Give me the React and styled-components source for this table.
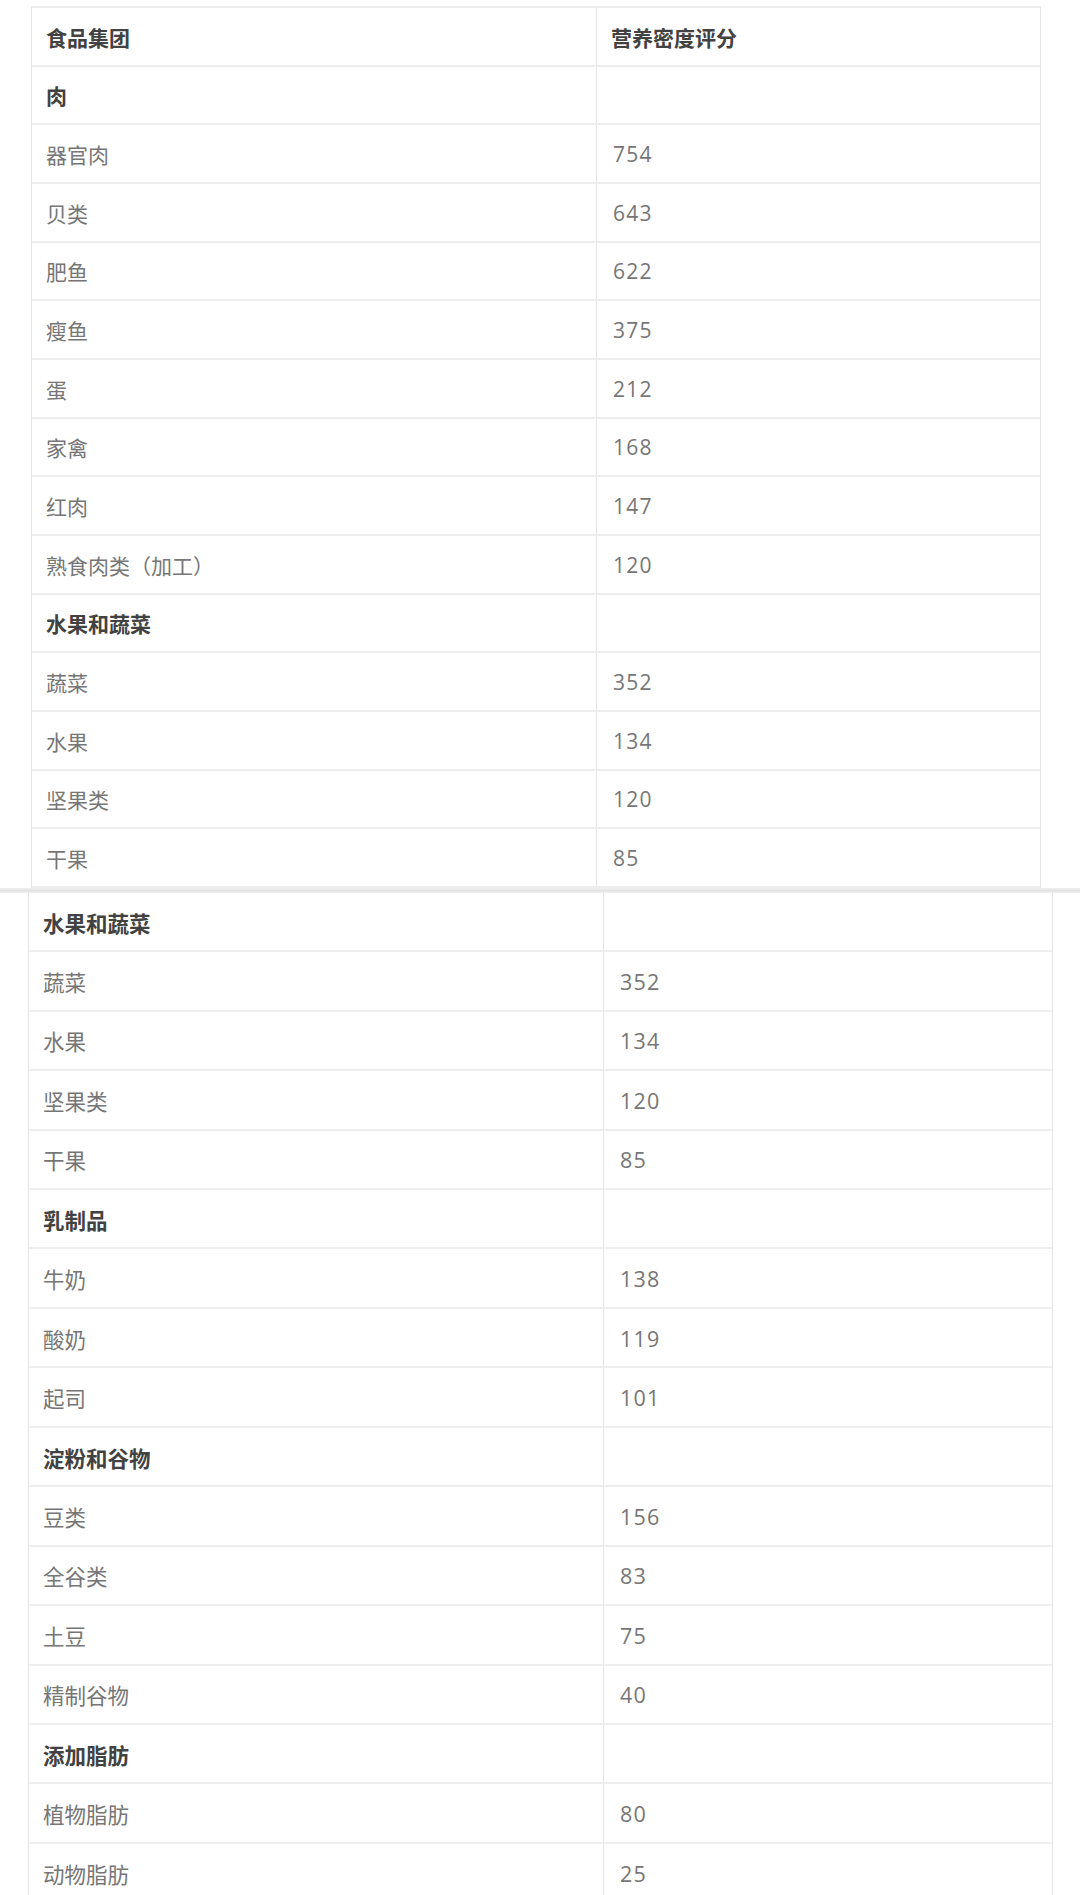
import React from "react";
import styled, { createGlobalStyle } from "styled-components";

const Global = createGlobalStyle`
  html, body { margin: 0; padding: 0; background: #ffffff; }
  body { font-family: "Noto Sans CJK SC", "Noto Sans", sans-serif; }
`;

const Page = styled.div`
  width: 1080px;
  height: 1895px;
  overflow: hidden;
  padding-top: 6px;
  box-sizing: border-box;
  display: flex;
  flex-direction: column;
`;

const Table = styled.div`
  margin-left: ${(p) => p.$left}px;
  width: ${(p) => p.$width}px;
  box-sizing: border-box;
  border-left: 1px solid #e6e6e6;
  border-right: 1px solid #e6e6e6;
  border-top: ${(p) => (p.$top ? "2px solid #ededed" : "none")};
  display: grid;
  grid-template-columns: ${(p) => p.$col}px 1fr;
  grid-auto-rows: ${(p) => p.$row}px;
  flex-shrink: 0;
`;

const Cell = styled.div`
  box-sizing: border-box;
  display: flex;
  align-items: center;
  padding-left: ${(p) => p.$pad}px;
  padding-top: 1px;
  border-bottom: 2px solid #eeeeee;
  border-right: ${(p) => (p.$first ? "1px solid #e6e6e6" : "none")};
  font-family: ${(p) =>
    p.$num
      ? '"Open Sans", "Noto Sans CJK SC", sans-serif'
      : '"Noto Sans CJK SC", "Noto Sans", sans-serif'};
  font-size: ${(p) => p.$size}px;
  font-weight: ${(p) => (p.$bold ? 700 : 400)};
  color: ${(p) => (p.$bold ? "#424242" : "#767676")};
  letter-spacing: ${(p) => (p.$num ? "1.2px" : "0")};
  white-space: nowrap;
`;

const Seam = styled.div`
  height: 5px;
  flex-shrink: 0;
  background: linear-gradient(#f2f2f2, #e2e2e2 50%, #f0f0f0);
`;

const first = [
  ["食品集团", "营养密度评分", true],
  ["肉", "", true],
  ["器官肉", "754"],
  ["贝类", "643"],
  ["肥鱼", "622"],
  ["瘦鱼", "375"],
  ["蛋", "212"],
  ["家禽", "168"],
  ["红肉", "147"],
  ["熟食肉类（加工）", "120"],
  ["水果和蔬菜", "", true],
  ["蔬菜", "352"],
  ["水果", "134"],
  ["坚果类", "120"],
  ["干果", "85"],
];

const second = [
  ["水果和蔬菜", "", true],
  ["蔬菜", "352"],
  ["水果", "134"],
  ["坚果类", "120"],
  ["干果", "85"],
  ["乳制品", "", true],
  ["牛奶", "138"],
  ["酸奶", "119"],
  ["起司", "101"],
  ["淀粉和谷物", "", true],
  ["豆类", "156"],
  ["全谷类", "83"],
  ["土豆", "75"],
  ["精制谷物", "40"],
  ["添加脂肪", "", true],
  ["植物脂肪", "80"],
  ["动物脂肪", "25"],
];

function DataTable({ rows, left, width, col, row, size, top }) {
  return (
    <Table $left={left} $width={width} $col={col} $row={row} $top={top}>
      {rows.map(([a, b, bold], i) => (
        <React.Fragment key={i}>
          <Cell $first $pad={14} $size={size} $bold={bold}>
            {a}
          </Cell>
          <Cell $pad={bold ? 14 : 16} $size={bold ? size : size} $bold={bold} $num={!bold}>
            {b}
          </Cell>
        </React.Fragment>
      ))}
    </Table>
  );
}

export default function App() {
  return (
    <>
      <Global />
      <Page>
        <DataTable rows={first} left={31} width={1010} col={565} row={58.66} size={21} top />
        <Seam />
        <DataTable rows={second} left={28} width={1025} col={575} row={59.45} size={21.5} />
      </Page>
    </>
  );
}
